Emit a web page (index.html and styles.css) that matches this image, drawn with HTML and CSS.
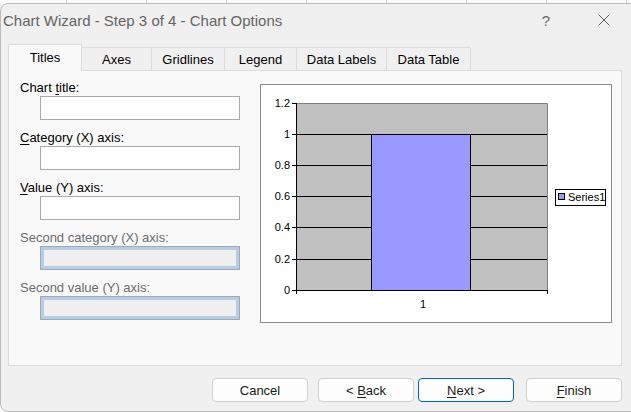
FILE: index.html
```html
<!DOCTYPE html>
<html>
<head>
<meta charset="utf-8">
<link rel="stylesheet" href="styles.css">
</head>
<body>
<div class="window">
  <div class="titlebar">
    <span class="title">Chart Wizard - Step 3 of 4 - Chart Options</span>
    <span class="tb-btn help">?</span>
    <span class="tb-btn close"><svg width="12" height="12" viewBox="0 0 12 12"><path d="M0.5 0.5 L11.5 11.5 M11.5 0.5 L0.5 11.5" stroke="#5a5a5a" stroke-width="1" fill="none"/></svg></span>
  </div>
  <div class="tabs">
    <div class="tab tab-titles active">Titles</div>
    <div class="tab tab-axes">Axes</div>
    <div class="tab tab-grid">Gridlines</div>
    <div class="tab tab-legend">Legend</div>
    <div class="tab tab-labels">Data Labels</div>
    <div class="tab tab-table">Data Table</div>
  </div>
  <div class="panel">
    <div class="fields">
      <div class="field">
        <div class="label">Chart <u>t</u>itle:</div>
        <div class="input"></div>
      </div>
      <div class="field">
        <div class="label"><u>C</u>ategory (X) axis:</div>
        <div class="input"></div>
      </div>
      <div class="field">
        <div class="label"><u>V</u>alue (Y) axis:</div>
        <div class="input"></div>
      </div>
      <div class="field">
        <div class="label disabled">Second category (X) axis:</div>
        <div class="input input-disabled"></div>
      </div>
      <div class="field">
        <div class="label disabled">Second value (Y) axis:</div>
        <div class="input input-disabled"></div>
      </div>
    </div>
    <div class="chart">
      <svg class="chart-svg" width="350" height="237" viewBox="0 0 350 237">
        <rect x="35" y="18" width="251" height="187" fill="#c0c0c0"/>
        <path d="M35 18.5 H286.5 V205" stroke="#808080" stroke-width="1" fill="none"/>
        <g stroke="#000" stroke-width="1">
          <path d="M31 18.5 H35.5"/>
          <path d="M31 49.5 H286"/>
          <path d="M31 80.5 H286"/>
          <path d="M31 111.5 H286"/>
          <path d="M31 142.5 H286"/>
          <path d="M31 174.5 H286"/>
          <path d="M31 205.5 H287"/>
          <path d="M35.5 18 V209"/>
          <path d="M286.5 205 V209"/>
        </g>
        <rect x="110.5" y="49.5" width="99" height="156" fill="#9999ff" stroke="#000" stroke-width="1"/>
        <g class="axis-text" text-anchor="end">
          <text x="29" y="22">1.2</text>
          <text x="29" y="53">1</text>
          <text x="29" y="84">0.8</text>
          <text x="29" y="115">0.6</text>
          <text x="29" y="146">0.4</text>
          <text x="29" y="178">0.2</text>
          <text x="29" y="209">0</text>
        </g>
        <text class="axis-text" x="162" y="223" text-anchor="middle">1</text>
        <rect x="294.5" y="104.5" width="50" height="16" fill="#fff" stroke="#000" stroke-width="1"/>
        <rect x="297.5" y="108.5" width="6" height="6" fill="#9999ff" stroke="#000" stroke-width="1"/>
        <text class="axis-text" x="307" y="116">Series1</text>
      </svg>
    </div>
  </div>
  <div class="buttons">
    <div class="btn"><span>Cancel</span></div>
    <div class="btn btn-back"><span>&lt; <u>B</u>ack</span></div>
    <div class="btn btn-next"><span><u>N</u>ext &gt;</span></div>
    <div class="btn btn-finish"><span><u>F</u>inish</span></div>
  </div>
</div>
</body>
</html>
```
FILE: styles.css
```css
html, body {
  margin: 0;
  padding: 0;
}
body {
  width: 631px;
  height: 412px;
  overflow: hidden;
  font-family: "Liberation Sans", Arial, sans-serif;
  font-size: 13px;
  color: #000;
  background: repeating-linear-gradient(90deg, #fbfbfb 0 66px, #d4d4d4 66px 67px, #fbfbfb 67px 80px);
}
.window {
  box-sizing: border-box;
  width: 645px;
  height: 409px;
  margin-top: 3px;
  background: #f0f0f0;
  border: 1px solid #bcbcbc;
  border-radius: 8px;
}
.titlebar {
  display: flex;
  align-items: center;
  height: 32px;
  padding-left: 2px;
}
.title {
  flex: 1;
  font-size: 15px;
  color: #646464;
}
.tb-btn {
  display: flex;
  align-items: center;
  justify-content: center;
  width: 46px;
  height: 32px;
  color: #6a6a6a;
}
.help {
  font-size: 15px;
}
.close {
  margin-left: 12px;
  margin-right: 17px;
}
.tabs {
  display: flex;
  align-items: flex-end;
  height: 26px;
  margin-top: 8px;
  padding-left: 7px;
}
.tab {
  box-sizing: border-box;
  height: 23px;
  border: 1px solid #dcdcdc;
  border-bottom: none;
  border-left: none;
  display: flex;
  align-items: center;
  justify-content: center;
  padding-top: 1px;
  background: #f0f0f0;
}
.tab.active {
  position: relative;
  z-index: 1;
  height: 27px;
  margin-bottom: -1px;
  border-left: 1px solid #dcdcdc;
  background: #f9f9f9;
  padding-bottom: 3px;
}
.tab-titles { width: 74px; }
.tab-axes { width: 70px; }
.tab-grid { width: 73px; }
.tab-legend { width: 72px; }
.tab-labels { width: 90px; }
.tab-table { width: 84px; }
.panel {
  box-sizing: border-box;
  width: 614px;
  height: 296px;
  margin-left: 7px;
  background: #f9f9f9;
  border: 1px solid #dcdcdc;
  display: grid;
  grid-template-columns: 220px 352px;
  column-gap: 20px;
  align-items: start;
  padding: 8px 0 0 11px;
}
.fields {
  display: flex;
  flex-direction: column;
}
.field {
  margin-bottom: 9px;
}
.label {
  height: 17px;
  line-height: 17px;
}
.label u {
  text-underline-offset: 2px;
}
.label.disabled {
  color: #6d6d6d;
}
.input {
  box-sizing: border-box;
  width: 200px;
  height: 24px;
  margin-left: 20px;
  background: #fff;
  border: 1px solid #aaaaaa;
}
.input-disabled {
  background: #efefef;
  border-color: #a8a8a8;
  box-shadow: inset 0 0 0 3px #b3cdea;
}
.chart {
  box-sizing: border-box;
  width: 352px;
  height: 239px;
  margin-top: 5px;
  background: #fff;
  border: 1px solid #8c8c8c;
}
.chart-svg {
  display: block;
}
.axis-text {
  font-family: "Liberation Sans", Arial, sans-serif;
  font-size: 11px;
  fill: #000;
}
.buttons {
  display: flex;
  margin-top: 12px;
  padding-left: 211px;
}
.btn {
  box-sizing: border-box;
  width: 96px;
  height: 24px;
  display: flex;
  align-items: center;
  justify-content: center;
  background: #fdfdfd;
  border: 1px solid #d0d0d0;
  border-radius: 4px;
  color: #1a1a1a;
}
.btn u {
  text-underline-offset: 2px;
}
.btn-back { margin-left: 10px; }
.btn-next {
  margin-left: 4px;
  border-color: #0067c0;
}
.btn-finish { margin-left: 12px; }
```
